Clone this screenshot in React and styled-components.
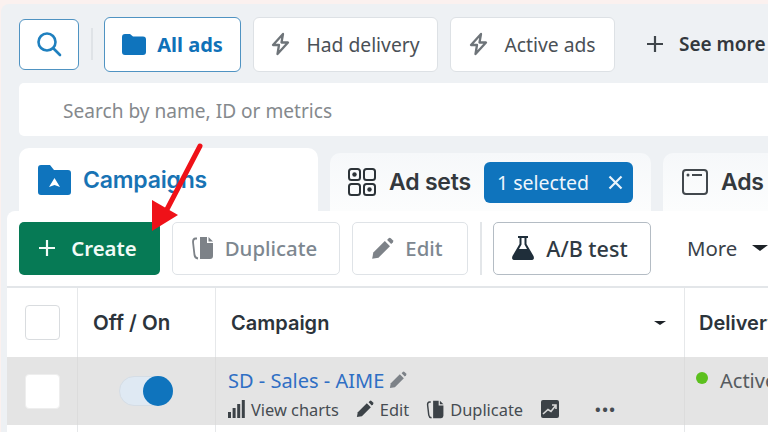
import React from "react";
import styled, { createGlobalStyle } from "styled-components";

const Global = createGlobalStyle`
  html, body { margin: 0; padding: 0; background: #fff; }
  body { width: 768px; height: 432px; overflow: hidden; font-family: "Noto Sans", "Liberation Sans", sans-serif; }
  * { box-sizing: border-box; }
`;

const Page = styled.div`
  position: relative;
  width: 768px;
  height: 432px;
  overflow: hidden;
  background: #fbf1ef;
  padding-top: 4px;
`;
const Shell = styled.div`
  width: 790px;
  height: 428px;
  margin-left: 1px;
  background: #eef1f4;
  border-radius: 8px 0 0 0;
  display: flex;
  flex-direction: column;
`;
const FilterRow = styled.div`
  display: flex;
  align-items: center;
  height: 54px;
  margin-top: 13px;
  padding-left: 18px;
`;
const IconButton = styled.button`
  width: 60px;
  height: 51px;
  background: #fff;
  border: 1.5px solid #4f93c2;
  border-radius: 6px;
  display: flex;
  align-items: center;
  justify-content: center;
  padding: 0;
`;
const VDivider = styled.div`
  width: 2px;
  height: ${(p) => p.$h ?? 32}px;
  background: ${(p) => p.$c ?? "#dfe3e7"};
  margin: 0 ${(p) => p.$r ?? 11}px 0 ${(p) => p.$l ?? 12}px;
  flex: none;
`;
const Chip = styled.div`
  height: 55px;
  width: ${(p) => p.$w}px;
  margin-right: 12px;
  flex: none;
  background: #fff;
  border: 1.5px solid ${(p) => (p.$active ? "#4f93c2" : "#dde1e5")};
  border-radius: 6px;
  display: flex;
  align-items: center;
  justify-content: center;
  gap: ${(p) => p.$gap ?? 16}px;
  color: ${(p) => (p.$active ? "#1071b8" : "#4a5056")};
  font-size: ${(p) => (p.$active ? 20 : 19.3)}px;
  font-weight: ${(p) => (p.$active ? 700 : 400)};
  white-space: nowrap;
`;
const SeeMore = styled.div`
  display: flex;
  align-items: center;
  gap: 15px;
  margin-left: 19px;
  font-size: 19px;
  font-weight: 600;
  color: #33383d;
  white-space: nowrap;
`;
const SearchBar = styled.div`
  height: 53px;
  margin: 12px 0 0 18px;
  background: #fff;
  border-radius: 5px;
  display: flex;
  align-items: center;
  padding: 2px 0 0 44px;
  color: #85898d;
  font-size: 19.1px;
`;
const TabRow = styled.div`
  display: flex;
  align-items: flex-end;
  gap: 12px;
  height: 63px;
  margin-top: 12px;
  padding-left: 18px;
`;
const Tab = styled.div`
  width: ${(p) => p.$w}px;
  height: ${(p) => p.$h}px;
  flex: none;
  border-radius: 10px 10px 0 0;
  background: ${(p) => (p.$active ? "#fff" : "linear-gradient(#f6f8fa, #fcfdfd)")};
  display: flex;
  align-items: center;
  gap: ${(p) => p.$gap ?? 12}px;
  padding: ${(p) => p.$pad ?? "0 0 0 19px"};
`;
const TabLabel = styled.span`
  font-family: "Inter", "Liberation Sans", sans-serif;
  font-size: 23px;
  font-weight: 600;
  letter-spacing: -0.2px;
  color: ${(p) => p.$c ?? "#33383d"};
  white-space: nowrap;
`;
const SelectedBadge = styled.div`
  height: 41px;
  width: 149px;
  background: #0f74bd;
  color: #eef6fc;
  border-radius: 6px;
  display: flex;
  align-items: center;
  gap: 19px;
  padding-left: 13px;
  font-size: 19.5px;
  white-space: nowrap;
`;
const Panel = styled.div`
  flex: 1;
  margin-left: 6px;
  background: #fff;
  border-radius: 8px 0 0 0;
`;
const Toolbar = styled.div`
  display: flex;
  align-items: center;
  height: 77px;
  padding: 0 0 1px 12px;
  border-bottom: 2px solid #e3e6e9;
`;
const ToolButton = styled.div`
  width: ${(p) => p.$w}px;
  height: 53px;
  margin-right: 12px;
  padding-right: ${(p) => p.$pr ?? 4}px;
  flex: none;
  border-radius: 5px;
  display: flex;
  align-items: center;
  justify-content: center;
  gap: ${(p) => p.$gap ?? 10}px;
  font-size: ${(p) => p.$size ?? 20.4}px;
  font-weight: ${(p) => (p.$primary ? 600 : 500)};
  white-space: nowrap;
  background: ${(p) => (p.$primary ? "#067a55" : "#fff")};
  color: ${(p) => (p.$primary ? "#f2fbf7" : p.$muted ? "#7d8790" : "#2f3a43")};
  border: ${(p) =>
    p.$primary ? "none" : `1.5px solid ${p.$muted ? "#dfe3e7" : "#b4bcc4"}`};
`;
const MoreButton = styled.div`
  display: flex;
  align-items: center;
  gap: 15px;
  margin-left: 24px;
  font-size: 20.4px;
  color: #3a4249;
  white-space: nowrap;
`;
const HeadRow = styled.div`
  display: grid;
  grid-template-columns: 71px 138px 469px 1fr;
  height: 69px;
`;
const BodyRow = styled(HeadRow)`
  height: 68px;
  background: #e4e4e4;
`;
const Cell = styled.div`
  border-right: 1.5px solid ${(p) => (p.$grey ? "#dcdcdc" : "#e6e8ea")};
  display: flex;
  align-items: center;
  justify-content: ${(p) => p.$justify ?? "flex-start"};
  padding: ${(p) => p.$pad ?? "0"};
  min-width: 0;
`;
const HeadText = styled.span`
  font-family: "Inter", "Liberation Sans", sans-serif;
  font-size: ${(p) => p.$size ?? 20}px;
  font-weight: 600;
  color: #2c343b;
  white-space: nowrap;
`;
const Check = styled.div`
  width: 35px;
  height: 35px;
  background: #fff;
  border: 1.5px solid ${(p) => (p.$plain ? "#eeeeee" : "#d9dcdf")};
  border-radius: 4px;
`;
const Toggle = styled.div`
  position: relative;
  width: 54px;
  height: 30px;
  border-radius: 15px;
  background: #dfe9f3;
  border: 1px solid #d5dde5;
  margin-right: 1px;
`;
const Knob = styled.div`
  position: absolute;
  right: -1px;
  top: -1px;
  width: 30px;
  height: 30px;
  border-radius: 50%;
  background: #0f74bd;
`;
const NameCol = styled.div`
  display: flex;
  flex-direction: column;
  gap: 4px;
  width: 100%;
`;
const NameLine = styled.div`
  display: flex;
  align-items: center;
  gap: 5px;
  color: #2f6fc4;
  font-size: 20px;
  white-space: nowrap;
`;
const ActionLine = styled.div`
  display: flex;
  align-items: center;
  color: #464c52;
  font-size: 16.4px;
  white-space: nowrap;
`;
const Action = styled.span`
  display: flex;
  align-items: center;
  gap: ${(p) => p.$gap ?? 6}px;
  margin-right: ${(p) => p.$mr ?? 17}px;
`;
const Dots = styled.span`
  color: #464c52;
  font-size: 15px;
  letter-spacing: 1.5px;
  font-weight: 700;
  margin-left: 36px;
`;
const StatusCell = styled.div`
  display: flex;
  align-items: flex-start;
  gap: 12px;
  padding: 10px 0 0 11px;
  color: #565b60;
  font-size: 20px;
`;
const Dot = styled.span`
  width: 12px;
  height: 12px;
  margin-top: 5px;
  border-radius: 50%;
  background: #5cc01e;
`;
const RowTail = styled(HeadRow)`
  height: 7px;
`;
const Caret = styled.span`
  width: 0;
  height: 0;
  border-left: ${(p) => p.$s}px solid transparent;
  border-right: ${(p) => p.$s}px solid transparent;
  border-top: ${(p) => p.$s * 0.75}px solid #1c2227;
  flex: none;
`;
const CampaignHead = styled.div`
  display: flex;
  align-items: center;
  justify-content: space-between;
  width: 100%;
`;
const ArrowOverlay = styled.svg`
  position: absolute;
  left: 140px;
  top: 135px;
`;

const Bolt = () => (
  <svg width="19" height="24" viewBox="0 0 19 24" fill="none" stroke="#6e7479" strokeWidth="2.3" strokeLinejoin="round">
    <path d="M12 2 L2 13 H8 L6.5 22 L17 10.5 H10.5 Z" />
  </svg>
);
const PenIcon = ({ size = 20, color = "#7d8288" }) => (
  <svg width={size} height={size} viewBox="0 0 20 20" fill={color}>
    <path d="M1 19 L2 13.5 L12 3.5 L16.5 8 L6.5 18 Z" />
    <path d="M14 2.5 L15.3 1 Q16.3 0.2 17.2 1 L19 2.8 Q19.8 3.8 19 4.7 L17.5 6 Z" />
  </svg>
);
const DupIcon = ({ w = 24, h = 24, color = "#7d8288" }) => (
  <svg width={w} height={h} viewBox="0 0 24 24" fill="none">
    <path d="M9 1 H16 V7 H22 V20 Q22 23 19 23 H9 Z" fill={color} />
    <path d="M17.5 1 L22 5.5 H17.5 Z" fill={color} />
    <path d="M6 2.5 H4.5 Q2 2.5 2 6 L3.5 19 Q4 22 7 22.5" stroke={color} strokeWidth="1.8" />
  </svg>
);

export default function App() {
  return (
    <Page>
      <Global />
      <Shell>
        <FilterRow>
          <IconButton>
            <svg width="26" height="26" viewBox="0 0 26 26" fill="none" stroke="#1f80bf" strokeWidth="2.6" strokeLinecap="round">
              <circle cx="11" cy="11" r="8.5" />
              <path d="M17.5 17.5 L24 24" />
            </svg>
          </IconButton>
          <VDivider />
          <Chip $active $w={137} $gap={11}>
            <svg width="24" height="21" viewBox="0 0 24 21" fill="#0f74bd">
              <path d="M0 3 Q0 0 3 0 H8 L11 2.5 H21 Q24 2.5 24 5.5 V18 Q24 21 21 21 H3 Q0 21 0 18 Z" />
            </svg>
            All ads
          </Chip>
          <Chip $w={185}><Bolt />Had delivery</Chip>
          <Chip $w={165}><Bolt />Active ads</Chip>
          <SeeMore>
            <svg width="18" height="18" viewBox="0 0 18 18" stroke="#3f454a" strokeWidth="2.2">
              <path d="M9 1 V17 M1 9 H17" />
            </svg>
            See more
          </SeeMore>
        </FilterRow>
        <SearchBar>Search by name, ID or metrics</SearchBar>
        <TabRow>
          <Tab $active $w={299} $h={63}>
            <svg width="33" height="30" viewBox="0 0 33 30">
              <path d="M0 3 Q0 0 3 0 H12 L16 5 H30 Q33 5 33 8 V27 Q33 30 30 30 H3 Q0 30 0 27 Z" fill="#0f74bd" />
              <path d="M16.5 13 L22 22 L16.5 20 L11 22 Z" fill="#fff" />
            </svg>
            <TabLabel $c="#1873b4">Campaigns</TabLabel>
          </Tab>
          <Tab $w={321} $h={58} $gap={13} $pad="0 0 0 18px">
            <svg width="28" height="28" viewBox="0 0 28 28" fill="none" stroke="#2c3338" strokeWidth="2">
              <rect x="1" y="1" width="11" height="11" rx="2.5" />
              <rect x="16" y="1" width="11" height="11" rx="2.5" />
              <rect x="1" y="16" width="11" height="11" rx="2.5" />
              <rect x="16" y="16" width="11" height="11" rx="2.5" />
              <circle cx="6.5" cy="6.5" r="2.2" fill="#2c3338" stroke="none" />
              <circle cx="21.5" cy="21.5" r="2.2" fill="#2c3338" stroke="none" />
            </svg>
            <TabLabel>Ad sets</TabLabel>
            <SelectedBadge>
              1 selected
              <svg width="15" height="15" viewBox="0 0 15 15" stroke="#eaf4fb" strokeWidth="2.2">
                <path d="M1.5 1.5 L13.5 13.5 M13.5 1.5 L1.5 13.5" />
              </svg>
            </SelectedBadge>
          </Tab>
          <Tab $w={140} $h={58} $gap={13} $pad="0 0 0 19px">
            <svg width="26" height="26" viewBox="0 0 26 26" fill="none" stroke="#42484d" strokeWidth="2">
              <rect x="1" y="1" width="24" height="24" rx="3" />
              <circle cx="6" cy="6" r="1.5" fill="#42484d" stroke="none" />
              <path d="M10 6 H20" />
            </svg>
            <TabLabel>Ads</TabLabel>
          </Tab>
        </TabRow>
        <Panel>
          <Toolbar>
            <ToolButton $primary $w={141} $gap={15}>
              <svg width="18" height="18" viewBox="0 0 18 18" stroke="#f2fbf7" strokeWidth="2.2">
                <path d="M9 1 V17 M1 9 H17" />
              </svg>
              Create
            </ToolButton>
            <ToolButton $muted $w={168}>
              <DupIcon />
              Duplicate
            </ToolButton>
            <ToolButton $muted $w={116} $gap={11} $pr={6}>
              <PenIcon size={23} />
              Edit
            </ToolButton>
            <VDivider $h={53} $c="#e3e6e9" $l={0} $r={11} />
            <ToolButton $w={158} $gap={12} $size={21.5}>
              <svg width="22" height="26" viewBox="0 0 22 26">
                <path d="M6 1 H16 V3 H14.5 V9 L21.5 21 Q23 25 19 25 H3 Q-1 25 .5 21 L7.5 9 V3 H6 Z M9.5 3 V9.5 L7 14 H15 L12.5 9.5 V3 Z" fill="#1f2e3a" fillRule="evenodd" />
              </svg>
              A/B test
            </ToolButton>
            <MoreButton>More <Caret $s={8} /></MoreButton>
          </Toolbar>
          <HeadRow>
            <Cell $justify="center"><Check /></Cell>
            <Cell $pad="0 0 0 15px"><HeadText $size={20.5}>Off / On</HeadText></Cell>
            <Cell $pad="0 18px 0 15px">
              <CampaignHead>
                <HeadText>Campaign</HeadText>
                <Caret $s={6.5} />
              </CampaignHead>
            </Cell>
            <Cell $pad="0 0 0 14px"><HeadText>Delivery</HeadText></Cell>
          </HeadRow>
          <BodyRow>
            <Cell $grey $justify="center"><Check $plain /></Cell>
            <Cell $grey $justify="center"><Toggle><Knob /></Toggle></Cell>
            <Cell $grey $pad="5px 0 0 12px">
              <NameCol>
                <NameLine>SD - Sales - AIME <PenIcon size={18} /></NameLine>
                <ActionLine>
                  <Action>
                    <svg width="17" height="18" viewBox="0 0 17 18" fill="#3c4247">
                      <rect x="0" y="12" width="3" height="6" /><rect x="4.6" y="8" width="3" height="10" />
                      <rect x="9.2" y="4" width="3" height="14" /><rect x="13.8" y="0" width="3" height="18" />
                    </svg>
                    View charts
                  </Action>
                  <Action><PenIcon size={18} color="#3c4247" />Edit</Action>
                  <Action $mr={18} $gap={5}><DupIcon w={19} h={19} color="#3c4247" />Duplicate</Action>
                  <svg width="18" height="18" viewBox="0 0 18 18">
                    <rect width="18" height="18" rx="2" fill="#3c4247" />
                    <path d="M2 14 L7 9.5 L10 11.5 L15 5 M11 5 H15 V9" stroke="#d8d8d8" strokeWidth="1.6" fill="none" />
                  </svg>
                  <Dots>•••</Dots>
                </ActionLine>
              </NameCol>
            </Cell>
            <StatusCell><Dot />Active</StatusCell>
          </BodyRow>
          <RowTail>
            <Cell />
            <Cell />
            <Cell />
          </RowTail>
        </Panel>
      </Shell>
      <ArrowOverlay width="70" height="100" viewBox="0 0 70 100">
        <path d="M60 11 L23 82" stroke="#ef1118" strokeWidth="5" strokeLinecap="round" />
        <path d="M12 65 L38 80 L12 96 Z" fill="#ef1118" />
      </ArrowOverlay>
    </Page>
  );
}
